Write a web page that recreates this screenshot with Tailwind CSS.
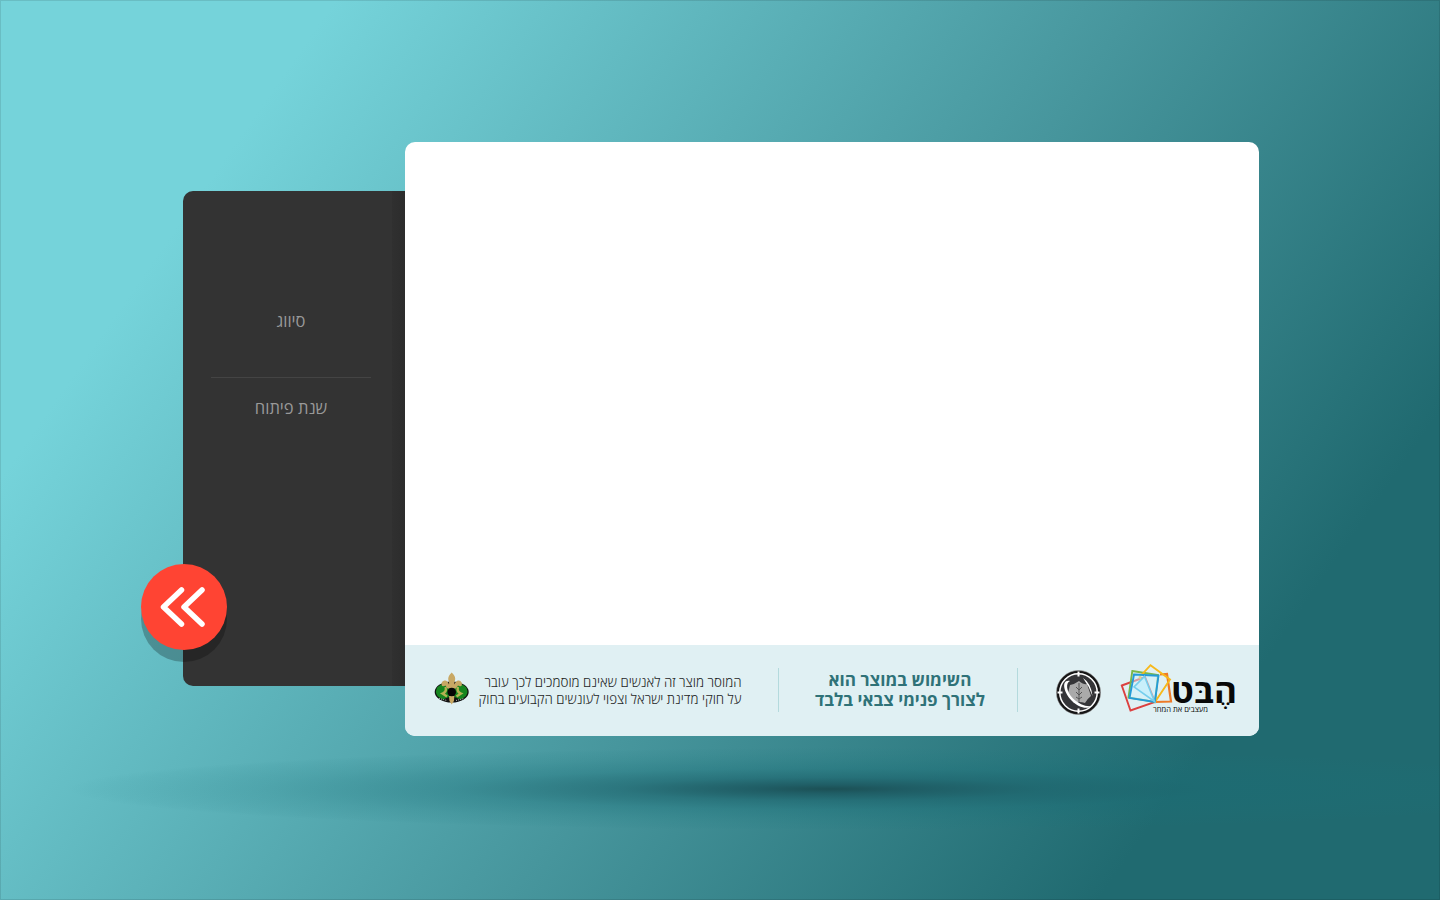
<!DOCTYPE html>
<html lang="he">
<head>
<meta charset="utf-8">
<title>הבט</title>
<script src="https://cdn.jsdelivr.net/npm/@tailwindcss/browser@4"></script>
</head>
<body class="relative h-[900px] w-[1440px] overflow-hidden bg-[linear-gradient(125deg,#75d3da_16.2%,#47969d_55%,#206a70_83.5%)] font-['Open_Sans','Noto_Sans',sans-serif]">
<div class="absolute left-[68px] right-0 top-[748px] h-[82px] bg-[radial-gradient(762px_41px_at_762px_41px,#1c5055_0%,#1c5860e0_10%,#1b636c98_28%,#1a6e7758_50%,#1a727a28_75%,#1a737c0c_95%,#1a737c00_100%)]"></div>
<main class="relative flex items-start pl-[183px] pt-[142px]">
  <aside class="relative mt-[49px] flex h-[495px] w-[222px] shrink-0 rounded-l-[10px] bg-[#333]">
    <div dir="rtl" class="flex w-[216px] flex-col items-center pt-[117px] text-[16.500px] leading-[26px] text-[#999]">
      <p>סיווג</p>
      <div class="mt-[43px] h-px w-[160px] bg-[#444]"></div>
      <p class="mt-[17px]">שנת פיתוח</p>
    </div>
    <div class="absolute inset-y-0 right-0 w-[13px] bg-linear-to-r from-[#303030] to-[#2c2c2c]"></div>
    <button aria-label="הבא" class="absolute left-[-42px] top-[373px] flex h-[86px] w-[86px] items-center justify-center rounded-full bg-[#ff4433] shadow-[0_12px_0_rgba(0,0,0,0.25)]">
      <svg width="86" height="86" fill="none" stroke="#fff" stroke-width="5.5" stroke-linecap="round" stroke-linejoin="round"><path d="M40.500 26 22.500 43 40.500 60M61 26 43 43 61 60"/></svg>
    </button>
  </aside>
  <section class="flex h-[594px] w-[854px] shrink-0 flex-col overflow-hidden rounded-[10px] bg-white">
    <div class="flex-1"></div>
    <footer class="flex h-[91px] items-center bg-[#e0f0f3]">
      <svg class="ml-[29px] mb-[2px] shrink-0 overflow-visible" width="36" height="34" viewBox="0 0 36 34">
        <ellipse cx="17.700" cy="19" rx="17" ry="10.500" fill="#111"/>
        <path d="M3 14.500Q9 8.500 15 12V24L9 26.500Q1 23 2 18ZM32.400 14.500Q26.400 8.500 20.400 12V24L26.400 26.500Q34.400 23 33.400 18Z" fill="#16861f"/>
        <path d="M17.700 -.5Q22.500 4 20.800 8Q20 10 20.500 11.500Q22 7 25 7.500Q29 8.500 27.500 13Q25.500 13.500 24 12.500L22 15.500H13.400L11.400 12.500Q10 13.500 8 13Q6.400 8.500 10.400 7.500Q13.500 7 15 11.500Q15.500 10 14.600 8Q13 4 17.700 -.5Z" fill="#c8a864"/>
        <path d="M15 23H20.400L19.900 28 17.700 31.500 15.500 28Z" fill="#c8a864"/>
        <path d="M11.500 14Q13 19 8.500 20.500L13 23.500M24 14Q22.500 19 27 20.500L22.500 23.500" stroke="#b3b152" stroke-width="2.300" fill="none"/>
        <circle cx="17.700" cy="19" r="4.300" fill="#050505"/>
        <path d="M5 25.500 13 27.500M22 27.500 30 25.500" stroke="#bbb" stroke-width="1" stroke-dasharray="1 1"/>
      </svg>
      <svg class="ml-[8px] shrink-0 overflow-visible" width="266" height="36" fill="#1f1f1f" font-size="14" font-weight="300" font-family="Open Sans" direction="rtl">
        <text x="263.500" y="13.500" textLength="257" lengthAdjust="spacingAndGlyphs">המוסר מוצר זה לאנשים שאינם מוסמכים לכך עובר</text>
        <text x="263.500" y="30.500" textLength="263" lengthAdjust="spacingAndGlyphs">על חוקי מדינת ישראל וצפוי לעונשים הקבועים בחוק</text>
      </svg>
      <div class="ml-[34px] mb-[2px] h-[44px] w-px bg-[#b4dadd]"></div>
      <svg class="ml-[36px] shrink-0 overflow-visible" width="172" height="44" fill="#2f7278" font-size="17.500" font-weight="700" font-family="Open Sans" direction="rtl">
        <text x="156.500" y="17" textLength="143" lengthAdjust="spacingAndGlyphs">השימוש במוצר הוא</text>
        <text x="170" y="37" textLength="170" lengthAdjust="spacingAndGlyphs">לצורך פנימי צבאי בלבד</text>
      </svg>
      <div class="ml-[30px] mb-[2px] h-[44px] w-px bg-[#b4dadd]"></div>
      <svg class="ml-[38px] mt-[3px] shrink-0 overflow-visible" width="45" height="45" viewBox="0 0 45 45" fill="none">
        <circle cx="22.500" cy="22.500" r="22" fill="#353538" stroke="#888" stroke-width=".8"/>
        <circle cx="22.500" cy="22.500" r="20.600" stroke="#151515" stroke-width="2"/>
        <circle cx="22.500" cy="22.500" r="18.700" stroke="#fff" stroke-width="1.500"/>
        <path d="M22.500 1.500V6.500M22.500 38.500V43.500M1.500 22.500H6.500M38.500 22.500H43.500" stroke="#fff" stroke-width="2"/>
        <path d="M14 15Q19 14 23 11Q28 15 31 14L35 26Q31 29 29 33Q23 31 18 33L12 23Z" fill="#aaa"/>
        <path d="M14 11C5 9 7 22 16 31C22 37 31 40 35 36C30 37 23 34 17 28.500C10 21 9.500 13 14 11Z" fill="#fff"/>
        <path d="M27 8Q35 13 36.500 26Q33 16 27 8Z" fill="#fff"/>
        <path d="M23 13V32M20 17 23 20 26 17M20 22 23 25 26 22M20 27 23 29 26 27" stroke="#555" stroke-width="1"/>
      </svg>
      <svg class="ml-[19px] shrink-0 overflow-visible" width="118" height="54" viewBox="0 0 118 54" fill="none">
        <g stroke-width="1.900" stroke-linejoin="miter">
          <path d="M1.800 21.500 25 13 35 38 10.500 46.500Z" stroke="#dc4140"/>
          <path d="M40 10.500 47 10 51 37.500 35 38" stroke="#ee7a28" stroke-width="2.200"/>
          <path d="M12.300 7 38 11 35 38 8.500 33.500Z" stroke="#79b84b"/>
          <path d="M30.500 1.200 50 15.500 35 38 19.500 13Z" stroke="#f7b91c"/>
          <path d="M14 10.500 38.500 11.700 34.800 38 9.500 34Z" fill="#cdeffb" fill-opacity=".5" stroke="#249bd8"/>
          <path d="M24.500 12.500 34.500 37.500 14 23Z" fill="#c8effb" stroke="#75ceed" stroke-width="1.600"/>
        </g>
        <g fill="#080808" font-family="Open Sans" direction="rtl">
          <text x="117" y="38.500" font-size="33" font-weight="700" textLength="66" lengthAdjust="spacingAndGlyphs">הֶבּט</text>
          <text x="88" y="47.500" font-size="7.500" textLength="55" lengthAdjust="spacingAndGlyphs">מעצבים את המחר</text>
        </g>
      </svg>
    </footer>
  </section>
</main>
<div class="pointer-events-none absolute inset-0 border border-black/10"></div>
</body>
</html>
